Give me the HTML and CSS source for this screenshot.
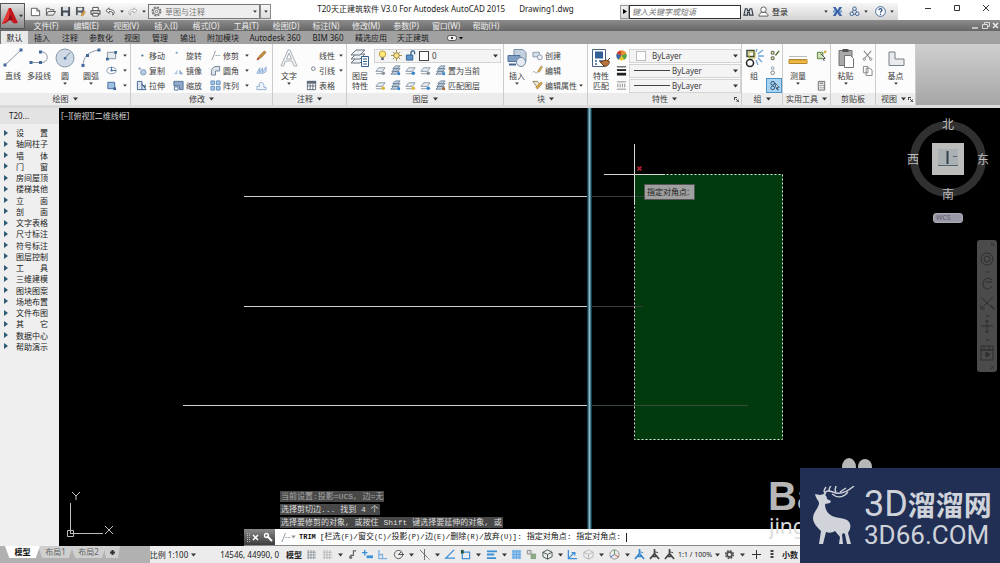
FILE: index.html
```html
<!DOCTYPE html>
<html lang="zh-CN">
<head>
<meta charset="utf-8">
<title>Drawing1.dwg</title>
<link rel="stylesheet" href="styles.css">
</head>
<body>
<svg class="defs" aria-hidden="true">
  <symbol id="dn" viewBox="0 0 5 4"><path d="M0 0.5h5L2.5 3.5z"/></symbol>
  <symbol id="line" viewBox="0 0 20 20"><path d="M2 17L18 2" stroke="#8796a5" fill="none"/><path d="M0.5 15.500h3v3h-3zM16.500 0.500h3v3h-3z" fill="#41699b"/></symbol>
  <symbol id="pline" viewBox="0 0 20 20"><path d="M2 14.500h11a5 5 0 0 0 0-10.500h-2" stroke="#8796a5" fill="none"/><path d="M0.500 13h3v3h-3zM10 13h3v3h-3zM10 2.500h3v3h-3z" fill="#41699b"/></symbol>
  <symbol id="circle" viewBox="0 0 20 20"><circle cx="10" cy="10" r="9" fill="#cfd9e5" stroke="#8496aa"/><path d="M10 10L15 4.500" stroke="#6c8099"/><path d="M8.800 9h2.500v2.500h-2.500z" fill="#41699b"/></symbol>
  <symbol id="arc" viewBox="0 0 20 20"><path d="M2 18C2 9 8 3 18 2" stroke="#8796a5" fill="none"/><path d="M0.500 16h3v3h-3zM5 6h3v3h-3zM16.500 0.500h3v3h-3z" fill="#41699b"/></symbol>
  <symbol id="rect" viewBox="0 0 12 12"><path d="M1.500 2.500h9v7h-9z" fill="#e6ebf0" stroke="#7f8c99"/><path d="M0 8.500h3v3h-3zM9 1h3v3h-3z" fill="#41699b"/></symbol>
  <symbol id="ellipse" viewBox="0 0 12 12"><ellipse cx="6" cy="6" rx="5" ry="3.500" fill="none" stroke="#7f95ab"/><path d="M6 6h5M6 6V2" stroke="#41699b"/><path d="M5 5h2v2h-2z" fill="#41699b"/></symbol>
  <symbol id="hatch" viewBox="0 0 12 12"><path d="M2 2.500h7.500v7h-7.500z" fill="#9fc0e2" stroke="#41699b"/><path d="M8 8h3v3h-3z" fill="#41699b"/></symbol>
  <symbol id="move" viewBox="0 0 12 12"><circle cx="7" cy="6" r="1.200" fill="#41699b"/></symbol>
  <symbol id="copy" viewBox="0 0 12 12"><circle cx="4" cy="4" r="1.500" fill="#9db4cc"/><circle cx="8" cy="8" r="3" fill="#b6cbe2" stroke="#7d9abb"/></symbol>
  <symbol id="stretch" viewBox="0 0 12 12"><path d="M1.500 1.500h5v9h-5zM6 10.500h5L7 5" fill="#dde7f2" stroke="#3c628e"/><path d="M6 4l4 4v-3" fill="none" stroke="#1d3b60"/></symbol>
  <symbol id="rotate" viewBox="0 0 12 12"><circle cx="4" cy="3" r="1.200" fill="#7da0c7"/></symbol>
  <symbol id="mirror" viewBox="0 0 12 12"><path d="M1 10h4V5z" fill="#b3cbe5"/><path d="M11 10H7V5z" fill="#84a6cc"/></symbol>
  <symbol id="scale" viewBox="0 0 12 12"><path d="M1 1.500h10v9h-4v-4h-6z" fill="#8ea9ca" stroke="#4d6f98"/><path d="M1.500 7.500h4v3.500h-4z" fill="#fff" stroke="#4d6f98"/></symbol>
  <symbol id="trim" viewBox="0 0 12 12"><path d="M2 11L6 1" stroke="#8b97a3"/><path d="M6 6h6" stroke="#8b97a3" stroke-dasharray="2 1"/></symbol>
  <symbol id="fillet" viewBox="0 0 12 12"><path d="M1.500 11V7c0-3 2-5 5-5.500h4v5H6v4.500z" fill="#dbe2ea" stroke="#6d7f92"/></symbol>
  <symbol id="array" viewBox="0 0 12 12"><path d="M1 1h4v4h-4zM7 1h4v4h-4zM1 7h4v4h-4zM7 7h4v4h-4z" fill="#a6c7e8" stroke="#6792bf"/></symbol>
  <symbol id="erase" viewBox="0 0 12 12"><path d="M1 11L4 6l5-5 2 1.500-4.500 5z" fill="#c8923b" stroke="#7b4d1f" stroke-width=".6"/><path d="M1 11l3-1-2-2z" fill="#ad422c"/></symbol>
  <symbol id="explode" viewBox="0 0 12 12"><path d="M1 9l3-6v5l3-5v5l4-6v5l-3 2z" fill="#cfe1f3" stroke="#89acd0"/></symbol>
  <symbol id="offset" viewBox="0 0 12 12"><path d="M1 10.500h10V8H8.500c1-3-1-5.500-3-5.500S2.500 5 4 7H1z" fill="#eef3f9" stroke="#8badd0"/></symbol>
  <symbol id="text" viewBox="0 0 20 20"><path d="M2 18L9 2h2l7 16h-3l-2-5H6.500l-2 5zM7.500 11h5L10 5z" fill="#f5f7f8" stroke="#a9b1b8"/></symbol>
  <symbol id="leader" viewBox="0 0 12 12"><circle cx="8" cy="4" r="2" fill="none" stroke="#6f7b88"/></symbol>
  <symbol id="table" viewBox="0 0 12 12"><path d="M1.500 1.500h9v9h-9zM1.500 6.500h9M4.500 4v7M7.500 4v7" fill="#fff" stroke="#5d6a78"/><path d="M1 1h10v3H1z" fill="#5d6a78"/></symbol>
  <symbol id="layers" viewBox="0 0 20 20"><g fill="#edf0f3" stroke="#66727f"><path d="M1 15l5-5h9l-5 5z"/><path d="M1 11l5-5h9l-5 5z"/><path d="M1 7l5-5h9l-5 5z"/></g><path d="M11.500 8.500h7v10h-7z" fill="#fff" stroke="#35608e"/><path d="M13 11h4M13 13.500h4M13 16h4" stroke="#35608e"/></symbol>
  <symbol id="lay" viewBox="0 0 12 12"><path d="M1 7l3-4h7L8 7z" fill="#e6ebf0" stroke="#8997a5"/><path d="M1 9.500h6l1-1" fill="none" stroke="#8997a5"/><circle cx="9" cy="9" r="2" fill="currentColor"/></symbol>
  <symbol id="lay2" viewBox="0 0 12 12"><path d="M1 10l3-3h6L7 10zM2 7l3-3h6L8 7zM3 4l3-3h5L8.500 4z" fill="#c4d1df" stroke="#6c839b"/><path d="M8 8h3v3H8z" fill="currentColor"/></symbol>
  <symbol id="bulb" viewBox="0 0 12 12"><circle cx="6" cy="4.500" r="3.500" fill="#ffe77a" stroke="#b99b2e"/><path d="M4.500 8h3v3h-3z" fill="#66707a"/></symbol>
  <symbol id="sun" viewBox="0 0 12 12"><path d="M6 0v12M0 6h12M2 2l8 8M10 2l-8 8" stroke="#a1873a"/><circle cx="6" cy="6" r="3" fill="#fbe58a" stroke="#8c7a3c"/></symbol>
  <symbol id="lock" viewBox="0 0 12 12"><path d="M6.500 6V3a2 2 0 0 1 4 0v1.500" fill="none" stroke="#2f5b8a" stroke-width="1.400"/><path d="M1.500 5.500h7v5.500h-7z" fill="#5f97cd" stroke="#2f5b8a"/></symbol>
  <symbol id="insert" viewBox="0 0 20 20"><path d="M7 1.500h9l3 3v9H7z" fill="#c3d0de" stroke="#7c8fa5"/><path d="M1 7.500h12v6H1z" fill="#7f9dc0" stroke="#52739b"/><circle cx="14" cy="14" r="4.500" fill="#e6ebf2" stroke="#74889f"/><path d="M2 16.500h7" stroke="#44668f" stroke-width="2"/></symbol>
  <symbol id="create" viewBox="0 0 12 12"><path d="M1 2.500h7v5H1z" fill="#d5dee8" stroke="#8496a9"/><circle cx="8.500" cy="8" r="2.700" fill="#edf1f6" stroke="#8496a9"/></symbol>
  <symbol id="edit" viewBox="0 0 12 12"><path d="M1 8c2-3 3 3 5 0" stroke="#7994b4" fill="none"/><path d="M6 7l4-6 1.500 1L8 8z" fill="#d9a947" stroke="#8b7044" stroke-width=".5"/></symbol>
  <symbol id="attr" viewBox="0 0 12 12"><path d="M1 1.500h5l2 3-2 4z" fill="#f4ead3" stroke="#8c7d63"/><path d="M4 8l6-6 1.500 1.500L6 10z" fill="#d9a947" stroke="#8b7044" stroke-width=".5"/></symbol>
  <symbol id="match" viewBox="0 0 20 20"><path d="M1.500 1.500h13v17h-13z" fill="#fff" stroke="#47617f"/><path d="M4 3.500h8v7H4z" fill="#315f98"/><path d="M4 13h2M8 13h4M4 16h2" stroke="#315f98" stroke-width="1.500"/><path d="M9 14l4 4c4 1 6-3 5-5l-3-1z" fill="#b8733b" stroke="#6b3e1d"/><path d="M16 13l3-3" stroke="#6b3e1d"/></symbol>
  <symbol id="wheel" viewBox="0 0 12 12"><circle cx="6" cy="6" r="5.500" fill="#e8c72e"/><path d="M6 6L.8 4A5.500 5.500 0 0 1 6 .5z" fill="#cf3d31"/><path d="M6 6V.5A5.500 5.500 0 0 1 11.200 4z" fill="#e48b2d"/><path d="M6 6L.8 4a5.500 5.500 0 0 0 2 6.500z" fill="#3863b0"/><path d="M6 6l5.200-2a5.500 5.500 0 0 1-2 6.500z" fill="#52a249"/></symbol>
  <symbol id="weights" viewBox="0 0 12 12"><path d="M1 2h10" stroke="#222"/><path d="M1 5.500h10" stroke="#222" stroke-width="2"/><path d="M1 10h10" stroke="#222" stroke-width="3"/></symbol>
  <symbol id="ltype" viewBox="0 0 12 12"><path d="M1 2h10M1 10h10" stroke="#888"/><path d="M2 4v4M4.500 4v4M7 4v4M9.500 4v4" stroke="#888"/></symbol>
  <symbol id="group" viewBox="0 0 20 20"><path d="M3 2.500h7v6H3z" fill="#fff" stroke="#3b4b3f" stroke-width="1.500"/><path d="M5 4h6v6H5z" fill="none" stroke="#b8b02f"/><circle cx="6" cy="15" r="3.500" fill="#fff" stroke="#222" stroke-width="1.500"/><path d="M14 6l5-4M14 8h6M14 10l4 4M12 12l2 5M12 4l1-3" stroke="#6ea4d6" stroke-width="1.300"/></symbol>
  <symbol id="ungroup" viewBox="0 0 12 12"><path d="M2.500 1.500h3v3h-3zM2.500 7.500h3v3h-3z" fill="#e9e08e" stroke="#56605a"/><path d="M7 6l4-5" stroke="#4b6b35" stroke-width="1.500"/></symbol>
  <symbol id="gedit" viewBox="0 0 12 12"><circle cx="4" cy="3.500" r="1.500" fill="none" stroke="#7a95af"/><circle cx="4" cy="8.500" r="2" fill="none" stroke="#777"/></symbol>
  <symbol id="gsel" viewBox="0 0 12 12"><circle cx="4" cy="3.500" r="2" fill="none" stroke="#254a6b"/><circle cx="4" cy="8.500" r="2" fill="none" stroke="#254a6b"/><path d="M6 3l5 5-2 .2L10 11 8.500 10z" fill="#fff" stroke="#254a6b"/></symbol>
  <symbol id="measure" viewBox="0 0 20 20"><path d="M1 8.500h18" stroke="#bbb"/><path d="M1 11.500h18v4H1z" fill="#eebb45" stroke="#b7852c"/><path d="M4 11v2M7 11v2M10 11v2M13 11v2M16 11v2" stroke="#b7852c"/></symbol>
  <symbol id="qsel" viewBox="0 0 12 12"><path d="M1.500 2.500h6v7h-6z" fill="#cfe2b4" stroke="#4d7b38"/><path d="M5 4l5 5-2 .5L9 12" stroke="#333" fill="#fff"/><path d="M9 3l2-2" stroke="#cba22d" stroke-width="2"/></symbol>
  <symbol id="calc" viewBox="0 0 12 12"><path d="M2.500 1.500h7v9.500h-7z" fill="#eee" stroke="#666"/><path d="M4 3.500h4M4 6h1M6 6h1M8 6h1M4 8.500h1M6 8.500h1M8 8.500h1" stroke="#555"/></symbol>
  <symbol id="paste" viewBox="0 0 20 20"><path d="M3 2.500h13v15H3z" fill="#a9a9a9" stroke="#717171"/><path d="M6.500 1h6v3h-6z" fill="#555"/><path d="M8.500 7.500h6l3 3v9h-9z" fill="#fff" stroke="#737373"/></symbol>
  <symbol id="cut" viewBox="0 0 12 12"><path d="M2 1l7 8M10 1L3 9" stroke="#888" stroke-width="1.200"/><circle cx="2.500" cy="10" r="1.300" fill="none" stroke="#888"/><circle cx="9.500" cy="10" r="1.300" fill="none" stroke="#888"/></symbol>
  <symbol id="copyclip" viewBox="0 0 12 12"><path d="M1.500 1.500h5v7h-5zM4.500 3.500h4l2.500 2v6H4.500z" fill="#fff" stroke="#808080"/></symbol>
  <symbol id="base" viewBox="0 0 20 20"><path d="M3 4h6v7h9v6.500H3z" fill="#e9ebee" stroke="#777f88"/></symbol>
  <symbol id="new" viewBox="0 0 12 12"><path d="M1.500 2.500h6l3 3v5h-9zM7.500 2.500v3h3" fill="#fff" stroke="#555"/></symbol>
  <symbol id="open" viewBox="0 0 12 12"><path d="M1.500 10V2.500h3l1 1.500h4v2M1.500 10l2-4h8l-2.500 4z" fill="#eee" stroke="#555"/></symbol>
  <symbol id="save" viewBox="0 0 12 12"><path d="M1 1h10v10H1z" fill="#454b52"/><path d="M3 1h6v4H3zM3.500 7h5v4h-5z" fill="#dce2e8"/></symbol>
  <symbol id="saveas" viewBox="0 0 12 12"><path d="M1 1h9v9H1z" fill="#555b62"/><path d="M3 2h5v3H3zM3 7h4v3H3z" fill="#e6e9ec"/><path d="M6 10l4-5 2 1.500-4 5z" fill="#d69b4a"/></symbol>
  <symbol id="print" viewBox="0 0 12 12"><path d="M3 5V1.500h6V5" fill="#fff" stroke="#444"/><path d="M1 5h10v4H1z" fill="#ccc" stroke="#444"/><path d="M3 8h6v3H3z" fill="#fff" stroke="#444"/></symbol>
  <symbol id="undo" viewBox="0 0 12 12"><path d="M4.500 2L1 5l3.500 3V6C8 5.500 9 7 8.500 10 12 6 9 3.500 4.500 4z" fill="#fff" stroke="currentColor"/></symbol>
  <symbol id="gear" viewBox="0 0 12 12"><circle cx="6" cy="6" r="4.500" fill="none" stroke="currentColor" stroke-width="1.800" stroke-dasharray="2.200 1.330"/><circle cx="6" cy="6" r="3.500" fill="none" stroke="currentColor"/><circle cx="6" cy="6" r="1.300" fill="none" stroke="currentColor"/></symbol>
  <symbol id="cog" viewBox="0 0 12 12"><circle cx="6" cy="6" r="4.300" fill="none" stroke="#555" stroke-width="1.500" stroke-dasharray="2 1.370"/><circle cx="6" cy="6" r="2.700" fill="none" stroke="#555" stroke-width="2"/></symbol>
  <symbol id="binoc" viewBox="0 0 12 12"><path d="M1 10l1.500-7h2l.5 2h2l.5-2h2L11 10H7V7H5v3z" fill="#d5d9de" stroke="#343a44" stroke-width="1.200"/></symbol>
  <symbol id="user" viewBox="0 0 12 12"><circle cx="6" cy="4" r="3" fill="#fff" stroke="#555"/><path d="M1 11c0-3 2-3.500 3.500-4h3C9 7.500 11 8 11 11z" fill="#fff" stroke="#555"/></symbol>
  <symbol id="exch" viewBox="0 0 12 12"><path d="M1 1h3l2 3.500L8 1h3L8 6l3 5H8L6 7.500 4 11H1l3-5z" fill="#3a62a8"/><path d="M1 6h3M8 6h3" stroke="#6f99cf" stroke-width="2"/></symbol>
  <symbol id="a360" viewBox="0 0 12 12"><path d="M6 2L2.500 9h7z" fill="none" stroke="#4e6d9c"/><g fill="#dbe5f2" stroke="#3d5b8b"><circle cx="6" cy="3" r="2"/><circle cx="3" cy="8.500" r="2"/><circle cx="9" cy="8.500" r="2"/></g></symbol>
  <symbol id="help" viewBox="0 0 12 12"><circle cx="6" cy="6" r="5.300" fill="#fff" stroke="#38618f"/><path d="M4.300 4.500c0-2.400 3.500-2 3.300 0C7.500 5.800 6 5.500 6 7.200" fill="none" stroke="#28507f" stroke-width="1.300"/><path d="M5.300 8.300h1.400v1.400H5.300z" fill="#28507f"/></symbol>
  <symbol id="grid" viewBox="0 0 12 12"><path d="M2.500 1v10M5.500 1v10M8.500 1v10M1 3.500h10M1 6.500h10M1 9.500h10" stroke="currentColor" stroke-width=".9"/></symbol>
  <symbol id="infer" viewBox="0 0 12 12"><path d="M4 11V7h3V2h3" fill="none" stroke="#666" stroke-width="1.300"/><circle cx="4" cy="9" r="1.800" fill="#777"/></symbol>
  <symbol id="dyn" viewBox="0 0 12 12"><path d="M3 1v6M0 4h6" stroke="#3a8fd8" stroke-width="1.500"/><path d="M5 7h7v3H5z" fill="#3a8fd8"/></symbol>
  <symbol id="ortho" viewBox="0 0 12 12"><path d="M2 1v9.500h9M2 6h4v4" fill="none" stroke="#7cb2e2" stroke-width="1.400"/></symbol>
  <symbol id="polar" viewBox="0 0 12 12"><circle cx="6" cy="6" r="4.500" fill="none" stroke="#555"/><path d="M6 6h6M6 6l3-3" stroke="#444"/></symbol>
  <symbol id="iso" viewBox="0 0 12 12"><path d="M1 1l10 10M6 0v12" stroke="#666"/><path d="M9 9l3 3" stroke="#aaa"/></symbol>
  <symbol id="track" viewBox="0 0 12 12"><path d="M11 1L2 10h10" fill="none" stroke="#3a8fd8" stroke-width="1.400"/></symbol>
  <symbol id="osnap" viewBox="0 0 12 12"><path d="M2.500 3.500h8v7h-8z" fill="none" stroke="#3a8fd8" stroke-width="1.300"/><path d="M1 1h3v4H1z" fill="#27543b"/></symbol>
  <symbol id="lwt" viewBox="0 0 12 12"><path d="M1 2.500h11M1 6h8M1 10h10" stroke="#3a8fd8" stroke-width="2"/></symbol>
  <symbol id="trans" viewBox="0 0 12 12"><path d="M1 1h10v10H1z" fill="#9cc8ef"/><path d="M1 3h10M1 6h10M1 9h10M3 1v10M6 1v10M9 1v10" stroke="#5ea3de" stroke-width=".8"/></symbol>
  <symbol id="cycle" viewBox="0 0 12 12"><path d="M1.500 1.500h4v4h-4z" fill="#ddd" stroke="#888"/><path d="M5 5h6v6H5z" fill="#8ca783"/></symbol>
  <symbol id="cube" viewBox="0 0 12 12"><path d="M6 1l5 2.500v5L6 11 1 8.500v-5zM1 3.500L6 6l5-2.500M6 6v5" fill="none" stroke="currentColor"/></symbol>
  <symbol id="ducs" viewBox="0 0 12 12"><path d="M1.500 1v9.500H11M2 10l6-6M5 4h3.500v3" fill="none" stroke="#3a8fd8" stroke-width="1.400"/></symbol>
  <symbol id="gizmo" viewBox="0 0 12 12"><circle cx="6" cy="6" r="5" fill="none" stroke="#888"/><path d="M6 6V1" stroke="#4a9b55"/><path d="M6 6l4.500 3" stroke="#c54b3e"/><path d="M6 6L1.500 9" stroke="#3a6fc0"/></symbol>
  <symbol id="person" viewBox="0 0 12 12"><path d="M6 0v6M6 5L1 11M6 5l5 6M3 8h6" fill="none" stroke="currentColor" stroke-width="1.800"/><path d="M6 3l4 1" stroke="currentColor"/></symbol>
</svg>

<header class="title">
  <button class="logo" aria-label="应用程序菜单"><svg width="16" height="16" viewBox="0 0 16 16"><path d="M0 16L7 0h2l7 15-4 .5L8 12l-4 3z" fill="#c6161d"/><path d="M7 0L0 16l8-6z" fill="#e33a38"/><path d="M8 6l3 6H6z" fill="#8d0e15"/></svg><svg class="dn"><use href="#dn"/></svg></button>
  <div class="quick">
    <button><svg class="i"><use href="#new"/></svg></button><button><svg class="i"><use href="#open"/></svg></button><button><svg class="i"><use href="#save"/></svg></button><button><svg class="i"><use href="#saveas"/></svg></button><button><svg class="i"><use href="#print"/></svg></button>
    <button class="drop undo"><svg class="i"><use href="#undo"/></svg><svg class="dn"><use href="#dn"/></svg></button>
    <button class="drop redo"><svg class="i flip"><use href="#undo"/></svg><svg class="dn"><use href="#dn"/></svg></button>
    <label class="combo workspace"><svg class="i"><use href="#gear"/></svg><select aria-label="工作空间"><option>草图与注释</option></select><svg class="dn"><use href="#dn"/></svg></label>
    <button class="more"><svg class="dn"><use href="#dn"/></svg></button>
  </div>
  <h1><span>T20天正建筑软件 V3.0 For Autodesk AutoCAD 2015</span><span>Drawing1.dwg</span></h1>
  <div class="info">
    <button class="fold"><svg width="4" height="5" viewBox="0 0 4 5"><path d="M0 0l4 2.500L0 5z"/></svg></button>
    <input class="search" type="text" placeholder="键入关键字或短语" aria-label="搜索">
    <button><svg class="i"><use href="#binoc"/></svg></button>
    <button class="login"><svg class="i"><use href="#user"/></svg>登录<svg class="dn"><use href="#dn"/></svg></button>
    <button><svg class="i"><use href="#exch"/></svg></button>
    <button class="drop"><svg class="i"><use href="#a360"/></svg><svg class="dn"><use href="#dn"/></svg></button>
    <button class="drop help"><svg class="i"><use href="#help"/></svg><svg class="dn"><use href="#dn"/></svg></button>
  </div>
  <div class="window">
    <button aria-label="最小化"><svg width="8" height="8"><path d="M1 4.500h6" stroke="#333"/></svg></button>
    <button aria-label="最大化"><svg width="8" height="8"><path d="M1.500 1.500h5v5h-5z" fill="none" stroke="#333"/></svg></button>
    <button aria-label="关闭"><svg width="8" height="8"><path d="M1 1l6 6M7 1L1 7" stroke="#333"/></svg></button>
  </div>
</header>

<nav class="menu">
  <button>文件(F)</button><button>编辑(E)</button><button>视图(V)</button><button>插入(I)</button><button>格式(O)</button><button>工具(T)</button><button>绘图(D)</button><button>标注(N)</button><button>修改(M)</button><button>参数(P)</button><button>窗口(W)</button><button>帮助(H)</button>
  <div class="docwin"><svg width="30" height="9"><path d="M2 7h6" stroke="#ddd" stroke-width="1.500"/><path d="M12.500 3.500h5v4h-5zM14.500 3V1.500h5v4H18" fill="none" stroke="#ddd"/><path d="M23 2l5 5M28 2l-5 5" stroke="#eee" stroke-width="1.500"/></svg></div>
</nav>
<nav class="tabs">
  <button class="on">默认</button><button>插入</button><button>注释</button><button class="w3">参数化</button><button>视图</button><button>管理</button><button>输出</button><button class="w4">附加模块</button><button class="w6">Autodesk 360</button><button class="w5">BIM 360</button><button class="w4">精选应用</button><button class="w4">天正建筑</button>
  <button class="pill"><svg width="16" height="6"><rect x=".5" y=".5" width="9" height="5" rx="2" fill="#eee" stroke="#555"/><circle cx="5" cy="3" r="1"/><path d="M12 2h4l-2 2.500z"/></svg></button>
</nav>

<main class="ribbon">
  <section class="p-draw">
    <div class="body">
      <button class="big"><svg><use href="#line"/></svg>直线</button>
      <button class="big"><svg><use href="#pline"/></svg>多段线</button>
      <button class="big"><svg><use href="#circle"/></svg>圆<svg class="dn"><use href="#dn"/></svg></button>
      <button class="big"><svg><use href="#arc"/></svg>圆弧<svg class="dn"><use href="#dn"/></svg></button>
      <div class="col"><button><svg class="i"><use href="#rect"/></svg><svg class="dn"><use href="#dn"/></svg></button><button><svg class="i"><use href="#ellipse"/></svg><svg class="dn"><use href="#dn"/></svg></button><button><svg class="i"><use href="#hatch"/></svg><svg class="dn"><use href="#dn"/></svg></button></div>
    </div>
    <h2>绘图<svg class="dn"><use href="#dn"/></svg></h2>
  </section>
  <section class="p-modify">
    <div class="body">
      <div class="col"><button><svg class="i"><use href="#move"/></svg>移动</button><button><svg class="i"><use href="#copy"/></svg>复制</button><button><svg class="i"><use href="#stretch"/></svg>拉伸</button></div>
      <div class="col"><button><svg class="i"><use href="#rotate"/></svg>旋转</button><button><svg class="i"><use href="#mirror"/></svg>镜像</button><button><svg class="i"><use href="#scale"/></svg>缩放</button></div>
      <div class="col wide"><button><svg class="i"><use href="#trim"/></svg>修剪<svg class="dn"><use href="#dn"/></svg></button><button><svg class="i"><use href="#fillet"/></svg>圆角<svg class="dn"><use href="#dn"/></svg></button><button><svg class="i"><use href="#array"/></svg>阵列<svg class="dn"><use href="#dn"/></svg></button></div>
      <div class="col icons"><button><svg class="i"><use href="#erase"/></svg></button><button><svg class="i"><use href="#explode"/></svg></button><button><svg class="i"><use href="#offset"/></svg></button></div>
    </div>
    <h2>修改<svg class="dn"><use href="#dn"/></svg></h2>
  </section>
  <section class="p-note">
    <div class="body">
      <button class="big"><svg><use href="#text"/></svg>文字<svg class="dn"><use href="#dn"/></svg></button>
      <div class="col wide"><button><svg class="i"></svg>线性<svg class="dn"><use href="#dn"/></svg></button><button><svg class="i"><use href="#leader"/></svg>引线<svg class="dn"><use href="#dn"/></svg></button><button><svg class="i"><use href="#table"/></svg>表格</button></div>
    </div>
    <h2>注释<svg class="dn"><use href="#dn"/></svg></h2>
  </section>
  <section class="p-layer">
    <div class="body">
      <button class="big"><svg><use href="#layers"/></svg>图层<br>特性</button>
      <div class="stack">
        <label class="combo"><svg class="i"><use href="#bulb"/></svg><svg class="i"><use href="#sun"/></svg><svg class="i"><use href="#lock"/></svg><span class="swatch dark"></span><select aria-label="图层"><option>0</option></select><svg class="dn"><use href="#dn"/></svg></label>
        <div class="strip"><button><svg class="i c-gray"><use href="#lay"/></svg></button><button><svg class="i c-blue"><use href="#lay2"/></svg></button><button><svg class="i c-blue"><use href="#lay"/></svg></button><button><svg class="i c-gray"><use href="#lay"/></svg></button><button class="named"><svg class="i c-blue"><use href="#lay2"/></svg>置为当前</button></div>
        <div class="strip"><button><svg class="i c-gold"><use href="#lay"/></svg></button><button><svg class="i c-blue"><use href="#lay2"/></svg></button><button><svg class="i c-gold"><use href="#lay"/></svg></button><button><svg class="i c-blue"><use href="#lay"/></svg></button><button class="named"><svg class="i c-brown"><use href="#lay2"/></svg>匹配图层</button></div>
      </div>
    </div>
    <h2>图层<svg class="dn"><use href="#dn"/></svg></h2>
  </section>
  <section class="p-block">
    <div class="body">
      <button class="big"><svg><use href="#insert"/></svg>插入<svg class="dn"><use href="#dn"/></svg></button>
      <div class="col wider"><button><svg class="i"><use href="#create"/></svg>创建</button><button><svg class="i"><use href="#edit"/></svg>编辑</button><button><svg class="i"><use href="#attr"/></svg>编辑属性<svg class="dn"><use href="#dn"/></svg></button></div>
    </div>
    <h2>块<svg class="dn"><use href="#dn"/></svg></h2>
  </section>
  <section class="p-props">
    <div class="body">
      <button class="big"><svg><use href="#match"/></svg>特性<br>匹配</button>
      <div class="col icons"><button><svg class="i"><use href="#wheel"/></svg></button><button><svg class="i"><use href="#weights"/></svg></button><button><svg class="i"><use href="#ltype"/></svg></button></div>
      <div class="stack">
        <label class="combo"><span class="swatch"></span><select aria-label="颜色"><option>ByLayer</option></select><svg class="dn"><use href="#dn"/></svg></label>
        <label class="combo"><span class="rule"></span><select aria-label="线宽"><option>ByLayer</option></select><svg class="dn"><use href="#dn"/></svg></label>
        <label class="combo"><span class="rule"></span><select aria-label="线型"><option>ByLayer</option></select><svg class="dn"><use href="#dn"/></svg></label>
      </div>
    </div>
    <h2>特性<svg class="dn"><use href="#dn"/></svg><svg class="launch" width="5" height="5"><path d="M0 .5h3M.5 0v3M2 2l3 3V2M5 5H2" stroke="#444" fill="none"/></svg></h2>
  </section>
  <section class="p-group">
    <div class="body">
      <button class="big"><svg><use href="#group"/></svg>组</button>
      <div class="col icons"><button><svg class="i"><use href="#ungroup"/></svg></button><button><svg class="i"><use href="#gedit"/></svg></button><button class="pressed"><svg class="i"><use href="#gsel"/></svg></button></div>
    </div>
    <h2>组<svg class="dn"><use href="#dn"/></svg></h2>
  </section>
  <section class="p-util">
    <div class="body">
      <button class="big"><svg><use href="#measure"/></svg>测量<svg class="dn"><use href="#dn"/></svg></button>
      <div class="col icons"><button><svg class="i"><use href="#qsel"/></svg></button><span></span><button><svg class="i"><use href="#calc"/></svg></button></div>
    </div>
    <h2>实用工具<svg class="dn"><use href="#dn"/></svg></h2>
  </section>
  <section class="p-clip">
    <div class="body">
      <button class="big"><svg><use href="#paste"/></svg>粘贴<svg class="dn"><use href="#dn"/></svg></button>
      <div class="col icons"><button><svg class="i"><use href="#cut"/></svg></button><button><svg class="i"><use href="#copyclip"/></svg></button></div>
    </div>
    <h2>剪贴板</h2>
  </section>
  <section class="p-view">
    <div class="body"><button class="big"><svg><use href="#base"/></svg>基点<svg class="dn"><use href="#dn"/></svg></button></div>
    <h2>视图<svg class="dn"><use href="#dn"/></svg><svg class="launch" width="5" height="5"><path d="M0 .5h3M.5 0v3M2 2l3 3V2M5 5H2" stroke="#444" fill="none"/></svg></h2>
  </section>
</main>

<div class="work">
  <aside class="palette">
    <h2>T20...</h2>
    <ul>
      <li><button>设 置</button></li><li><button>轴网柱子</button></li><li><button>墙 体</button></li><li><button>门 窗</button></li><li><button>房间屋顶</button></li><li><button>楼梯其他</button></li><li><button>立 面</button></li><li><button>剖 面</button></li><li><button>文字表格</button></li><li><button>尺寸标注</button></li><li><button>符号标注</button></li><li><button>图层控制</button></li><li><button>工 具</button></li><li><button>三维建模</button></li><li><button>图块图案</button></li><li><button>场地布置</button></li><li><button>文件布图</button></li><li><button>其 它</button></li><li><button>数据中心</button></li><li><button>帮助演示</button></li>
    </ul>
  </aside>
  <div class="canvas">
    <svg class="drawing">
      <g transform="translate(-59 -108)" fill="none">
        <path d="M635 174h148v266H635z" fill="#013b0d"/>
        <path d="M591 196.500h54M591 306.500h52" stroke="#383c3a"/>
        <path d="M591 405.500h157" stroke="#3a4a3e"/>
        <path d="M244 196.500h343M244 306.500h343M183 405.500h404" stroke="#d2d2d2"/>
        <path d="M589.500 108v422" stroke="#0f3c4c" stroke-width="5"/>
        <path d="M589.500 108v422" stroke="#8fb9c6" stroke-width="2"/>
        <path d="M634.500 174.500h148v265h-148z" stroke="#e0e6e0" stroke-dasharray="2 2"/>
        <path d="M634.500 144v61M604 174.500h61" stroke="#d6d6d6"/>
        <path d="M637.500 166.500l4 4M641.500 166.500l-4 4" stroke="#c01c34" stroke-width="1.500"/>
        <path d="M70.500 503v31M71 533.500h32M67.500 530.500h6v6h-6z" stroke="#bdbdbd"/>
        <path d="M72 492l4 4 4-4M76 496v4M105 526l8 8M113 526l-8 8" stroke="#c4c4c4"/>
      </g>
    </svg>
    <div class="viewlabel">[−][俯视][二维线框]</div>
    <output class="tip">指定对角点:</output>
    <div class="compass">
      <svg width="84" height="84"><circle cx="42" cy="42" r="34" fill="none" stroke="#303030" stroke-width="8"/><path d="M26 26h32v32H26z" fill="#bcbcba"/><path d="M32 32h20v17H32z" fill="#aab0b4"/><path d="M41.500 34v13" stroke="#33414d" stroke-width="2"/><path d="M32 48.500h20M47 39.500h4" stroke="#56626c"/></svg>
      <span class="n">北</span><span class="s">南</span><span class="w">西</span><span class="e">东</span>
    </div>
    <button class="wcs">WCS</button>
    <div class="navbar"><svg width="20" height="132" fill="none" stroke="#2e2e2e"><path d="M14 3l3 3M17 3l-3 3M14 126l3 3M17 126l-3 3"/><circle cx="10" cy="19" r="6"/><circle cx="10" cy="19" r="3"/><path d="M9 32h3M15 40c-5-4-10 0-9 5s7 5 9 1M8 42h7M4 57l12 12M16 57L5 68M4 65v4h4M14 65l4 5M9 76h3M10 80v13M4 86h12M8 82l2-2 2 2M8 91l2 2 2-2M9 100h3M4 106h12v4H4zM4 110h12v10H4zM7 106v4M12 106v4"/><path d="M9 112v5l4-2.500z" fill="#2e2e2e"/></svg></div>
    <div class="history"><p class="old">当前设置:投影=UCS, 边=无</p><p>选择剪切边... 找到 4 个</p><p>选择要修剪的对象, 或按住 Shift 键选择要延伸的对象, 或</p></div>
    <div class="command">
      <div class="grip"><svg width="31" height="16"><path d="M3.500 4v9M5.500 4v9" stroke="#bbb" stroke-dasharray="1 1"/><path d="M9 6l5 5M14 6l-5 5" stroke="#fff" stroke-width="1.500"/><path d="M23 7l5 5" stroke="#fff" stroke-width="2"/><circle cx="22.500" cy="6.500" r="2" fill="none" stroke="#fff" stroke-width="1.300"/></svg></div>
      <div class="prompt"><svg class="i"><use href="#trim"/></svg><svg class="dn"><use href="#dn"/></svg><b>TRIM</b><span>[栏选<i>(F)</i>/窗交<i>(C)</i>/投影<i>(P)</i>/边<i>(E)</i>/删除<i>(R)</i>/放弃<i>(U)</i>]: 指定对角点: 指定对角点:</span><span class="caret"></span></div>
    </div>
  </div>
</div>

<footer class="status">
  <div class="layouts"><button class="on">模型</button><button>布局1</button><button>布局2</button><button class="add"><svg width="7" height="7"><path d="M3.500 1v5M1 3.500h5" stroke="#333" stroke-width="2"/></svg></button></div>
  <button class="ratio">比例 1:100<svg class="dn"><use href="#dn"/></svg></button>
  <span class="coords">14546, 44990, 0</span>
  <button class="model">模型</button>
  <div class="toggles">
    <button><svg class="i c-gray"><use href="#grid"/></svg></button><button class="drop"><svg class="i c-pale"><use href="#grid"/></svg><svg class="dn"><use href="#dn"/></svg></button><button><svg class="i"><use href="#infer"/></svg></button><button><svg class="i"><use href="#dyn"/></svg></button><button><svg class="i"><use href="#ortho"/></svg></button><button class="drop"><svg class="i"><use href="#polar"/></svg><svg class="dn"><use href="#dn"/></svg></button><button class="drop"><svg class="i"><use href="#iso"/></svg><svg class="dn"><use href="#dn"/></svg></button><button><svg class="i"><use href="#track"/></svg></button><button class="drop"><svg class="i"><use href="#osnap"/></svg><svg class="dn"><use href="#dn"/></svg></button><button class="drop"><svg class="i"><use href="#lwt"/></svg><svg class="dn"><use href="#dn"/></svg></button><button><svg class="i"><use href="#trans"/></svg></button><button><svg class="i"><use href="#cycle"/></svg></button><button class="drop"><svg class="i c-green"><use href="#cube"/></svg><svg class="dn"><use href="#dn"/></svg></button><button><svg class="i"><use href="#ducs"/></svg></button><button class="drop"><svg class="i c-pale"><use href="#cube"/></svg><svg class="dn"><use href="#dn"/></svg></button><button class="drop"><svg class="i"><use href="#gizmo"/></svg><svg class="dn"><use href="#dn"/></svg></button><button><svg class="i c-blue"><use href="#person"/></svg></button><button><svg class="i c-dark"><use href="#person"/></svg></button><button><svg class="i c-dark"><use href="#person"/></svg></button>
  </div>
  <button class="zoomlevel">1:1 / 100%<svg class="dn"><use href="#dn"/></svg></button>
  <button class="drop cog"><svg class="i"><use href="#cog"/></svg><svg class="dn"><use href="#dn"/></svg></button>
  <button class="plus"><svg class="i"><path d="M5.500 1v9M1 5.500h9" stroke="#333"/></svg></button>
  <button class="unit"><svg width="4" height="9"><path d="M2 0v9" stroke="#444" stroke-width="3" stroke-dasharray="2 1"/></svg>小数</button>
</footer>

<div class="baidu"><svg width="34" height="14"><ellipse cx="8" cy="10" rx="7" ry="9" fill="#b7b7b7"/><ellipse cx="24" cy="10" rx="7" ry="8" fill="#b7b7b7"/></svg><strong>Ba</strong><em>jing</em></div>
<div class="brand">
  <svg width="48" height="62" viewBox="0 0 48 62"><path d="M3 8l5 1 4-1c2 1 3 3 3 5l4 2-1 2-5 1c0 5 2 9 7 12 5 2 11 2 15 4 3 2 4 5 3 9l-2 4 3 11h-4l-2-10-2-1-1 2 1 9h-4l1-7-5-6c-3 2-6 2-9 1l-3 12H7l2-13C5 41 1 37 1 32c0-6 6-10 6-15 0-2-3-4-4-9z" fill="#d0d3d9"/><path d="M12 9c1-4 3-5 9-3 6 3 14 0 21-6M14 8c-3-2-2-4 0-7M18 5c-2-2 0-4 1-5M24 6c-2-3 0-4 0-6M20 8c5 4 11 4 16-2M28 6l6-4" fill="none" stroke="#d0d3d9" stroke-width="1.400"/></svg>
  <div class="words"><div class="cn"><span>3D</span>溜溜网</div><div class="en">3D66.COM</div></div>
</div>
</body>
</html>
```
FILE: styles.css
```css
* { box-sizing: border-box; }
body {
  margin: 0; height: 100vh; display: flex; flex-direction: column; position: relative; overflow: hidden;
  font: 8px/12px "Noto Sans", "Noto Sans CJK SC", sans-serif; color: #3c3c3c; background: #efefef;
}
h1, h2, p, ul { margin: 0; padding: 0; font-size: 8px; font-weight: normal; list-style: none; }
button, select, input { font: inherit; color: inherit; border: 0; padding: 0; margin: 0; background: none; appearance: none; white-space: nowrap; }
button { display: flex; align-items: center; justify-content: center; }
svg { flex: none; display: block; }
.defs { position: absolute; width: 0; height: 0; }
.i { width: 11px; height: 11px; }
.dn { width: 5px; height: 4px; fill: #333; }
.flip { transform: scaleX(-1); }
.c-gray { color: #8b949d; } .c-blue { color: #3a86cf; } .c-gold { color: #ddb63c; } .c-brown { color: #a8642b; }
.c-pale { color: #b5b5b5; } .c-dark { color: #444; } .c-green { color: #3c5347; }

.title { height: 20px; flex: none; display: flex; background: #fff; }
.logo { width: 25px; height: 26px; margin-top: 3px; z-index: 2; gap: 1px; border: 1px solid #555; background: linear-gradient(#e0e0e0, #8c8c8c); }
.logo .dn { width: 4px; }
.quick { display: flex; align-items: center; margin-top: 3px; padding-left: 3px; background: linear-gradient(#fafafa, #d9d9d9); }
.quick > button { width: 15px; }
.quick > .drop { width: 22px; gap: 4px; }
.quick .dn { width: 4px; height: 3px; }
.undo { color: #555; } .redo { color: #aaa; }
.combo { display: flex; align-items: center; border: 1px solid #d4d4d4; background: #f4f4f4; height: 14px; padding: 0 2px; gap: 3px; }
.combo select { flex: 1; min-width: 0; }
.quick .workspace { width: 112px; height: 15px; border-color: #777; background: #eee; color: #777; margin-left: 1px; }
.quick .more { width: 11px; height: 15px; border: 1px solid #888; }
.title h1 { flex: 1; display: flex; justify-content: center; gap: 14px; align-items: center; height: 17px; white-space: nowrap; color: #222; }
.info { display: flex; align-items: center; margin-top: 3px; width: 278px; background: linear-gradient(#f6f6f6, #d4d4d4); }
.info > button { width: 15px; }
.info .fold { width: 9px; height: 14px; border: 1px solid #999; }
.search { width: 112px; height: 14px; border: 1px solid #333; background: #fff; padding: 0 2px; font-style: italic; }
.search::placeholder { color: #777; opacity: 1; }
.info .login { width: 74px; gap: 3px; justify-content: flex-start; padding-left: 2px; color: #222; }
.login .dn { margin-left: auto; margin-right: 2px; }
.info .dn { width: 4px; height: 3px; }
.info .drop { width: 26px; gap: 4px; }
.window { display: flex; width: 102px; justify-content: space-around; padding: 0 0 0 16px; height: 16px; }

.menu { height: 11px; flex: none; display: flex; align-items: center; padding-left: 26px; color: #eee; background: linear-gradient(#8c8c8c, #666); }
.menu button { width: 40px; height: 11px; }
.docwin { margin-left: auto; }
.tabs { height: 13px; flex: none; display: flex; background: #a1a1a1; color: #222; }
.tabs button { width: 28px; height: 13px; }
.tabs .on { width: 28px; background: #e9e9e9; border-left: 1px solid #777; }
.tabs .w3 { width: 34px; } .tabs .w4 { width: 42px; } .tabs .w5 { width: 44px; } .tabs .w6 { width: 62px; }
.tabs .pill { width: 42px; }

.ribbon { height: 61px; flex: none; display: flex; background: linear-gradient(#cfcfcf, #a6a6a6); }
.ribbon section { flex: none; display: flex; flex-direction: column; background: #fcfcfc; border-right: 1px solid #ccc; }
.ribbon .body { flex: 1; display: flex; padding-top: 4px; }
.ribbon h2 { height: 12px; display: flex; align-items: center; justify-content: center; gap: 4px; background: #ececec; position: relative; }
.launch { position: absolute; right: 2px; top: 4px; }
.big { flex-direction: column; justify-content: flex-start; flex: none; width: 26px; height: 45px; line-height: 10px; }
.big svg:first-child { width: 20px; height: 20px; margin-bottom: 3px; }
.big .dn { margin-top: 1px; width: 4px; height: 3px; }
.col { display: grid; grid-template-rows: repeat(3, 15px); width: 37px; }
.col button { justify-content: flex-start; gap: 2px; }
.col .dn { margin-left: auto; margin-right: 3px; width: 4px; height: 3px; }
.wide { width: 42px; }
.icons { width: 16px; }
.icons button { justify-content: center; }
.icons .pressed { background: #a9d3f2; border: 1px solid #4b93c9; }
.p-draw { width: 131px; } .p-draw .col { width: 24px; margin-left: 2px; }
.p-modify { width: 142px; } .p-modify .body { padding-left: 5px; } .p-modify .icons { margin-left: 1px; }
.p-note { width: 74px; } .p-note .body { padding-left: 3px; } .p-note .col { margin-left: 4px; width: 41px; }
.p-layer { width: 157px; } .p-layer .stack { flex: 1; padding: 0 2px 0 1px; }
.p-block { width: 84px; } .p-block .col { width: 54px; margin-left: 2px; }
.p-props { width: 154px; } .p-props .icons { margin-left: -1px; } .p-props .stack { flex: 1; }
.p-props .combo { gap: 2px; }
.p-group { width: 41px; } .p-group .big { width: 24px; }
.p-util { width: 48px; } .p-util .big { width: 30px; }
.p-clip { width: 45px; } .p-clip .big { width: 29px; } .p-clip .icons { width: 15px; }
.p-view { width: 40px; } .p-view .big { width: 39px; }
.p-view h2 { justify-content: flex-start; padding-left: 5px; }
.stack { display: grid; grid-template-rows: repeat(3, 15px); align-items: center; }
.strip { display: flex; gap: 4px; padding-left: 1px; }
.named { gap: 2px; }
.swatch { width: 10px; height: 10px; border: 1px solid #bbb; background: #fff; margin: 0 4px; }
.swatch.dark { border-color: #444; margin: 0; }
.rule { width: 36px; height: 1px; background: #444; margin-left: 2px; }

.work { flex: 1; min-height: 0; display: flex; border-top: 3px solid #dadada; }
.palette { width: 59px; flex: none; background: #efefef; color: #222; }
.palette h2 { height: 16px; line-height: 16px; padding-left: 9px; background: #e3e3e3; }
.palette ul { height: 225px; margin-top: 3px; display: grid; }
.palette li { display: flex; align-items: center; padding-left: 4px; }
.palette li::before { content: ""; border: 3px solid transparent; border-left: 4px solid #2c5a73; border-right: 0; margin-right: 8px; }
.palette li button { display: block; width: 32px; line-height: 11px; text-align-last: justify; }
.canvas { flex: 1; position: relative; background: #000; overflow: hidden; }
.drawing { position: absolute; inset: 0; width: 100%; height: 100%; }
.viewlabel { position: absolute; left: 2px; top: 2px; color: #d0d0d0; }
.tip { position: absolute; left: 585px; top: 76px; width: 51px; height: 16px; line-height: 13px; padding: 0 2px; background: #a0a0a0; border: 1px solid #555; color: #222; }
.compass { position: absolute; right: 10px; top: 9px; width: 84px; height: 84px; color: #bdbdbd; font-size: 12px; }
.compass span { position: absolute; width: 12px; text-align: center; }
.n { left: 36px; top: 2px; } .s { left: 36px; top: 72px; } .w { left: 1px; top: 37px; } .e { left: 71px; top: 37px; }
.wcs { position: absolute; right: 37px; top: 105px; width: 30px; height: 10px; border-radius: 3px; background: #9a9aa8; color: #5c5c66; font-size: 7px; border: 1px solid #aaaab4; justify-content: flex-start; padding-left: 2px; }
.navbar { position: absolute; right: 3px; top: 132px; border-radius: 3px; background: #4b4b4b; }
.history { position: absolute; left: 221px; bottom: 18px; display: flex; flex-direction: column; align-items: flex-start; gap: 2px; color: #ddd; font-family: "Liberation Mono", "Noto Sans CJK SC", monospace; }
.history p { background: #484848; line-height: 11px; padding: 0 1px; white-space: nowrap; }
.history .old { color: #a8a8a8; }
.command { position: absolute; left: 185px; right: 0; bottom: 0; height: 17px; display: flex; border-bottom: 1px solid #888; background: #fff; }
.grip { background: linear-gradient(#8a8a8a, #3c3c3c); width: 31px; }
.prompt { display: flex; align-items: center; padding-left: 5px; color: #111; white-space: nowrap; font-family: "Liberation Mono", "Noto Sans CJK SC", monospace; }
.prompt .dn { fill: #999; }
.prompt b { margin: 0 4px 0 3px; font-size: 7px; }
.prompt i { font-style: normal; font-size: 7px; }
.caret { width: 1px; height: 9px; background: #222; margin-left: 5px; }

.status { height: 17px; flex: none; display: flex; align-items: center; background: #ececec; color: #222; }
.layouts { flex: none; width: 150px; height: 17px; display: flex; background: #b1b1b1; padding-left: 5px; }
.layouts button { width: 35px; height: 12px; margin-right: -2px; color: #666; background: #cfcfcf; clip-path: polygon(0 0, 100% 0, 88% 100%, 12% 100%); }
.layouts .on { background: #fff; color: #111; font-weight: bold; z-index: 1; }
.layouts .add { width: 16px; }
.ratio { flex: none; gap: 3px; width: 44px; margin-left: 1px; }
.coords { flex: none; width: 84px; text-align: right; white-space: nowrap; }
.status .model { flex: none; width: 23px; justify-content: flex-end; margin-right: 2px; }
.model, .unit { font-weight: bold; }
.toggles { display: flex; flex: none; }
.toggles button { width: 15px; }
.toggles .drop { width: 26px; gap: 5px; }
.zoomlevel { flex: none; gap: 3px; width: 44px; font-size: 7px; }
.cog { flex: none; width: 26px; gap: 5px; } .plus { flex: none; width: 19px; } .unit { flex: none; gap: 8px; margin-left: 4px; }

.baidu { position: absolute; right: 128px; bottom: 18px; width: 104px; height: 88px; color: #b7b7b7; }
.baidu svg { position: absolute; left: 73px; top: 0; }
.baidu strong { position: absolute; left: 0; top: 22px; width: 32px; overflow: hidden; font: bold 40px/34px "Liberation Sans", sans-serif; }
.baidu em { position: absolute; left: 1px; top: 57px; width: 31px; overflow: hidden; font: 21px/25px "Noto Sans", sans-serif; color: #dcdcdc; }
.brand { position: absolute; right: 0; bottom: 0; width: 200px; height: 95px; padding: 18px 0 0 12px; display: flex; background: #212f55; color: #cfd2d9; }
.words { margin-left: 4px; white-space: nowrap; }
.cn { font: bold 28px/32px "Noto Sans CJK SC", sans-serif; display: flex; align-items: center; height: 36px; }
.cn span { font: 36px/36px Roboto, sans-serif; }
.en { font: 26px/26px Roboto, sans-serif; }
```
